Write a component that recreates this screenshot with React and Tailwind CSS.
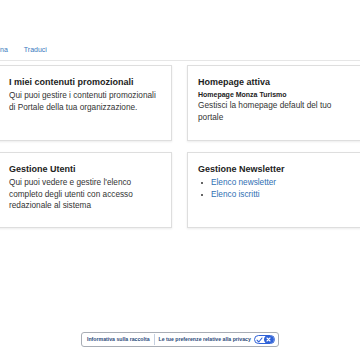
import React from "react";

const Card = ({ children }) => (
  <div className="bg-white border border-[#dedede] shadow-[0_1px_2px_rgba(0,0,0,0.08)] px-[10px] pt-[11px] h-[76px]">
    {children}
  </div>
);

const Title = ({ children }) => (
  <h3 className="text-[9px] leading-[11px] font-bold text-[#222] mb-[2px]">{children}</h3>
);

const Body = ({ children }) => (
  <p className="text-[8.25px] leading-[11.5px] text-[#333]">{children}</p>
);

const Bullet = ({ children }) => (
  <li className="flex items-center text-[8.25px] leading-[12px]">
    <span className="w-[2px] h-[2px] rounded-full bg-[#333] ml-[3px] mr-[8px]" />
    <a className="text-[#2f6fb3]">{children}</a>
  </li>
);

export default function App() {
  return (
    <div
      className="w-[360px] h-[360px] overflow-hidden bg-white flex flex-col"
      style={{ fontFamily: '"Liberation Sans", Arial, sans-serif' }}
    >
      <div className="h-[61px] border-b border-[#e6e6e6] flex items-end pb-[6px] text-[7px] leading-[9px] text-[#3a78bd]">
        <span className="ml-[-14px]">Pagina</span>
        <span className="ml-[16px]">Traduci</span>
      </div>

      <div className="mt-[4px] ml-[-2px] grid grid-cols-[174px_174px] gap-x-[15px] gap-y-[11px]">
        <Card>
          <Title>I miei contenuti promozionali</Title>
          <Body>Qui puoi gestire i contenuti promozionali di Portale della tua organizzazione.</Body>
        </Card>
        <Card>
          <Title>Homepage attiva</Title>
          <p className="text-[7px] leading-[10px] font-bold text-[#222]">Homepage Monza Turismo</p>
          <Body>Gestisci la homepage default del tuo portale</Body>
        </Card>
        <Card>
          <Title>Gestione Utenti</Title>
          <Body>Qui puoi vedere e gestire l'elenco completo degli utenti con accesso redazionale al sistema</Body>
        </Card>
        <Card>
          <Title>Gestione Newsletter</Title>
          <ul>
            <Bullet>Elenco newsletter</Bullet>
            <Bullet>Elenco iscritti</Bullet>
          </ul>
        </Card>
      </div>

      <div className="flex-1" />

      <div className="flex justify-center pb-[13px]">
        <div className="h-[15px] w-[198px] border border-[#a8adb5] rounded-[3px] bg-white flex items-center text-[5.2px] font-bold text-[#2b4a7a]">
          <span className="pl-[5px] pr-[4px]">Informativa sulla raccolta</span>
          <span className="w-px h-[11px] bg-[#c5d0e0]" />
          <span className="pl-[4px] pr-[3px]">Le tue preferenze relative alla privacy</span>
          <span className="flex items-center h-[9px] w-[21px] rounded-full border border-[#2f62d8] bg-white overflow-hidden">
            <span className="flex-1 flex items-center justify-center">
              <svg width="7" height="6" viewBox="0 0 7 6">
                <path d="M1 3.2 L2.8 5 L6 1" fill="none" stroke="#2f62d8" strokeWidth="1.1" strokeLinecap="round" strokeLinejoin="round" />
              </svg>
            </span>
            <span className="w-[10px] h-[9px] rounded-full bg-[#2f62d8] flex items-center justify-center">
              <svg width="5" height="5" viewBox="0 0 5 5">
                <path d="M1 1 L4 4 M4 1 L1 4" stroke="#fff" strokeWidth="1.1" strokeLinecap="round" />
              </svg>
            </span>
          </span>
        </div>
      </div>
    </div>
  );
}
